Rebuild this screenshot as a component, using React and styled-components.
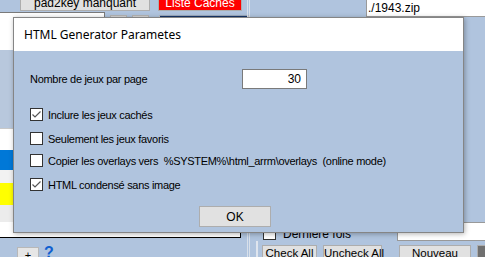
import React from 'react'
import styled, { createGlobalStyle } from 'styled-components'

const Global = createGlobalStyle`
  html, body { margin: 0; padding: 0; }
  body {
    width: 485px; height: 257px; overflow: hidden;
    background: #b0c4de;
    font-family: "Liberation Sans", Arial, sans-serif;
    font-size: 11px; color: #000;
  }
`

const Screen = styled.div`
  position: relative;
  width: 485px; height: 257px; overflow: hidden;
  background: #b0c4de;
  display: grid;
  grid-template-columns: 250px 235px;
  grid-template-rows: 257px;
`

/* ---------- background app, left half ---------- */

const LeftSide = styled.div`
  display: flex; flex-direction: column;
  min-height: 0; overflow: hidden;
`

const TopButtons = styled.div`
  display: flex; gap: 8px; flex: none;
  height: 11px; padding-left: 20px;
  align-items: flex-end;
`

const WinButton = styled.div`
  box-sizing: border-box;
  width: ${p => p.w}px; height: 23px;
  background: ${p => (p.red ? '#ff0000' : '#e1e1e1')};
  color: ${p => (p.red ? '#fff' : '#000')};
  border: 1px solid #adadad;
  font-size: 12px; line-height: 13px;
  white-space: nowrap;
  display: flex; align-items: flex-end; justify-content: center;
`

const ToolRow = styled.div`
  display: flex; gap: 5px; margin-top: 1px; height: 38px; flex: none;
`

const WhiteBox = styled.div`
  width: 105px; background: #fff;
  border-top: 1px solid #7a7a7a; border-right: 1px solid #7a7a7a;
  box-sizing: border-box;
`

const SmallBtn = styled.div`
  width: 17px; margin-top: 3px;
  background: #d6d6d6; border: 1px solid #b5b5b5; box-sizing: border-box;
`

const NavyPanel = styled.div`
  width: 90px; margin: 3px 0 0 5px;
  border: 1px solid #c8c8c8; border-top-color: #9aa8bb;
  background: #16366a;
  box-sizing: border-box;
`

const GridBox = styled.div`
  width: 241px; height: 188px; box-sizing: border-box; flex: none;
  border-right: 1px solid #000; border-bottom: 1px solid #000;
  display: flex; flex-direction: column;
`

const GridRow = styled.div`
  height: ${p => p.h}px;
  background: ${p => p.bg};
  border-bottom: ${p => (p.line ? '1px solid #c8c8c8' : 'none')};
`

const BottomLeft = styled.div`
  display: flex; align-items: flex-start; gap: 5px;
  padding: 9px 0 0 17px;
`

const PlusBtn = styled.div`
  width: 20px; height: 12px;
  background: #e6e6e6; border: 1px solid #b8b8b8; border-bottom: none;
  font-size: 11px; text-align: center; line-height: 14px;
`

const Help = styled.div`
  color: #1060d0; font-weight: bold; font-size: 16px; line-height: 18px;
  margin-top: -3px;
`

/* ---------- background app, right half ---------- */

const RightSide = styled.div`
  display: flex; flex-direction: column;
  min-height: 0;
  border-left: 3px double #d8e0ea;
  margin-left: -3px;
`

const PathField = styled.div`
  margin-left: 116px; height: 17px; box-sizing: border-box; flex: none;
  background: #fff; border-bottom: 1px solid #9a9a9a; border-left: 1px solid #9a9a9a;
  font-size: 12px; padding: 1px 0 0 1px;
`

const Middle = styled.div`
  flex: 1; display: flex; min-height: 0;
`

const MidLeft = styled.div`
  flex: 1; display: flex; flex-direction: column; justify-content: flex-end;
  padding-left: 13px;
`

const LastRow = styled.div`
  display: flex; align-items: flex-end; gap: 7px; font-size: 12px;
  white-space: nowrap; height: 19px;
  span { line-height: 13px; }
`

const SmallCheck = styled.div`
  width: 11px; height: 11px; margin-bottom: 1px;
  border: 1px solid #333; background: #fff;
`

const BigWhite = styled.div`
  width: 101px; height: 19px; margin-left: 39px;
  background: #fff; border: 1px solid #999; box-sizing: border-box;
`

const MidRight = styled.div`
  width: 45px; display: flex; flex-direction: column;
`

const InfoPanel = styled.div`
  margin-top: 10px; height: 58px; flex: none;
  background: #fff; border-top: 1px solid #aaa;
  font-size: 12px; line-height: 13px;
  padding-top: 3px; box-sizing: border-box;
`

const InfoLine = styled.div`
  padding-left: ${p => p.x}px;
  white-space: nowrap;
`

const Label = styled.div`
  font-size: 12px; margin-top: 9px; padding-left: 23px;
`

const BtnColumn = styled.div`
  display: flex; flex-direction: column; gap: 3px;
  margin-top: 4px; width: 22px; margin-left: 11px;
`

const SqButton = styled.div`
  height: 19px; box-sizing: border-box; flex: none;
  background: #e4e4e4; border: 1px solid #9c9c9c;
  font-size: 10px; color: #555; text-align: right; padding-right: 2px;
`

const BottomRight = styled.div`
  display: flex; gap: 6px; height: 12px; padding: 4px 0 0 4px; flex: none;
  margin-left: 6px;
  border-left: 2px solid #dfe5ee;
`

const FlatBtn = styled.div`
  flex: none;
  width: ${p => p.w}px; height: 16px; box-sizing: border-box;
  margin-left: ${p => p.ml || 0}px;
  background: ${p => (p.dark ? '#707070' : '#e1e1e1')};
  border: 1px solid #adadad; border-bottom: none;
  font-size: 11.5px; text-align: center; line-height: 14px;
  white-space: nowrap;
`

/* ---------- dialog ---------- */

const Dialog = styled.div`
  position: absolute; left: 13px; top: 17px;
  width: 451px; height: 216px; box-sizing: border-box;
  border: 1px solid #858585;
  box-shadow: 1px 1px 5px rgba(0, 0, 0, 0.3);
  background: #b0c4de;
  display: flex; flex-direction: column;
`

const TitleBar = styled.div`
  height: 33px; background: #fff;
  display: flex; align-items: center; padding-left: 10px;
  font-family: "Noto Sans", "Liberation Sans", sans-serif;
  font-size: 12px;
`

const Body = styled.div`
  flex: 1; display: flex; flex-direction: column;
  padding: 18px 0 0 16px;
  font-size: 11px; letter-spacing: -0.3px;
`

const FieldRow = styled.div`
  display: grid; grid-template-columns: 212px 65px;
  height: 20px; align-items: center;
`

const NumberBox = styled.div`
  height: 20px; box-sizing: border-box;
  background: #fff; border: 1px solid #7a7a7a;
  font-size: 12px; letter-spacing: 0; text-align: right; padding: 2px 5px 0 0;
`

const CheckRow = styled.div`
  display: flex; align-items: center; gap: 5px;
  height: 13px; margin-top: ${p => p.mt}px;
  white-space: pre;
`

const Box = styled.div`
  width: 13px; height: 13px; box-sizing: border-box;
  border: 1px solid #333; background: #fff;
  display: flex; align-items: center; justify-content: center;
`

const OkButton = styled.div`
  width: 72px; height: 21px; box-sizing: border-box;
  margin: 15px 0 0 169px;
  background: #e1e1e1; border: 1px solid #adadad;
  font-size: 12px; letter-spacing: 0;
  display: flex; align-items: center; justify-content: center;
`

const Check = () => (
  <svg width="11" height="11" viewBox="0 0 11 11">
    <polyline points="1.5,5.5 4,8 9.5,2.5" fill="none" stroke="#555" strokeWidth="1.2" />
  </svg>
)

const Option = ({ mt, checked, children }) => (
  <CheckRow mt={mt}>
    <Box>{checked && <Check />}</Box>
    <span>{children}</span>
  </CheckRow>
)

export default function App() {
  return (
    <Screen>
      <Global />
      <LeftSide>
        <TopButtons>
          <WinButton w={130}>pad2key manquant</WinButton>
          <WinButton w={84} red>Liste Cachés</WinButton>
        </TopButtons>
        <ToolRow>
          <WhiteBox />
          <SmallBtn />
          <SmallBtn />
          <NavyPanel />
        </ToolRow>
        <GridBox>
          <GridRow h={78} bg="#b8c8dd" line />
          <GridRow h={22} bg="#fff" />
          <GridRow h={20} bg="#0078d7" />
          <GridRow h={13} bg="#f2f2f2" />
          <GridRow h={22} bg="#ffff00" />
          <GridRow h={17} bg="#ececec" />
          <GridRow h={15} bg="#fff" />
        </GridBox>
        <BottomLeft>
          <PlusBtn>+</PlusBtn>
          <Help>?</Help>
        </BottomLeft>
      </LeftSide>

      <RightSide>
        <PathField>./1943.zip</PathField>
        <Middle>
          <MidLeft>
            <LastRow>
              <SmallCheck />
              <span>Dernière fois</span>
              <BigWhite />
            </LastRow>
          </MidLeft>
          <MidRight>
            <InfoPanel>
              <InfoLine x={23}>Midway</InfoLine>
              <InfoLine x={19}>suite</InfoLine>
              <InfoLine x={17}>onde</InfoLine>
              <InfoLine x={17}>créer</InfoLine>
            </InfoPanel>
            <Label>ée</Label>
            <BtnColumn>
              <SqButton />
              <SqButton />
              <SqButton>✓</SqButton>
              <SqButton />
              <SqButton />
              <SqButton />
            </BtnColumn>
          </MidRight>
        </Middle>
        <BottomRight>
          <FlatBtn w={55}>Check All</FlatBtn>
          <FlatBtn w={59}>Uncheck All</FlatBtn>
          <FlatBtn w={72} ml={11}>Nouveau</FlatBtn>
          <FlatBtn w={14} dark />
        </BottomRight>
      </RightSide>

      <Dialog>
        <TitleBar>HTML Generator Parametes</TitleBar>
        <Body>
          <FieldRow>
            <span>Nombre de jeux par page</span>
            <NumberBox>30</NumberBox>
          </FieldRow>
          <Option mt={19} checked>Inclure les jeux cachés</Option>
          <Option mt={11}>Seulement les jeux favoris</Option>
          <Option mt={9}>{'Copier les overlays vers  %SYSTEM%\\html_arrm\\overlays  (online mode)'}</Option>
          <Option mt={11} checked>HTML condensé sans image</Option>
          <OkButton>OK</OkButton>
        </Body>
      </Dialog>
    </Screen>
  )
}
